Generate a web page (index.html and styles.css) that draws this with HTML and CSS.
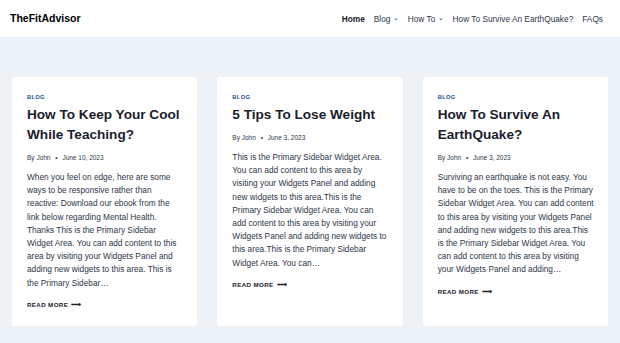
FILE: index.html
```html
<!DOCTYPE html>
<html lang="en">
<head>
    <meta charset="UTF-8">
    <meta name="viewport" content="width=device-width, initial-scale=1.0">
    <title>TheFitAdvisor</title>
    <link rel="stylesheet" href="styles.css">
</head>

<body>
    <header class="site-header">
        <div class="logo">TheFitAdvisor</div>
        <nav class="menu">
            <a class="active" href="#">Home</a>
            <a href="#">Blog <span class="caret">&#8964;</span></a>
            <a href="#">How To <span class="caret">&#8964;</span></a>
            <a href="#">How To Survive An EarthQuake?</a>
            <a href="#">FAQs</a>
        </nav>
    </header>

    <main class="posts">
        <article class="card">
            <div class="cat">Blog</div>
            <h2 class="post-title">How To Keep Your Cool While Teaching?</h2>
            <div class="meta">By John <span class="dot">&bull;</span> June 10, 2023</div>
            <p class="excerpt">When you feel on edge, here are some ways to be responsive rather than reactive: Download our ebook from the link below regarding Mental Health. Thanks This is the Primary Sidebar Widget Area. You can add content to this area by visiting your Widgets Panel and adding new widgets to this area. This is the Primary Sidebar&hellip;</p>
            <a class="more" href="#">Read More <span class="arrow">&#10230;</span></a>
        </article>

        <article class="card">
            <div class="cat">Blog</div>
            <h2 class="post-title">5 Tips To Lose Weight</h2>
            <div class="meta">By John <span class="dot">&bull;</span> June 3, 2023</div>
            <p class="excerpt">This is the Primary Sidebar Widget Area. You can add content to this area by visiting your Widgets Panel and adding new widgets to this area.This is the Primary Sidebar Widget Area. You can add content to this area by visiting your Widgets Panel and adding new widgets to this area.This is the Primary Sidebar Widget Area. You can&hellip;</p>
            <a class="more" href="#">Read More <span class="arrow">&#10230;</span></a>
        </article>

        <article class="card">
            <div class="cat">Blog</div>
            <h2 class="post-title">How To Survive An EarthQuake?</h2>
            <div class="meta">By John <span class="dot">&bull;</span> June 3, 2023</div>
            <p class="excerpt">Surviving an earthquake is not easy. You have to be on the toes. This is the Primary Sidebar Widget Area. You can add content to this area by visiting your Widgets Panel and adding new widgets to this area.This is the Primary Sidebar Widget Area. You can add content to this area by visiting your Widgets Panel and adding&hellip;</p>
            <a class="more" href="#">Read More <span class="arrow">&#10230;</span></a>
        </article>
    </main>
</body>
</html>
```

FILE: styles.css
```css
body {
    margin: 0;
    padding: 0;
    background-color: #edf2f7;
    font-family: "Liberation Sans", Arial, sans-serif;
    color: #2d3748;
}

a {
    text-decoration: none;
    color: inherit;
}

.site-header {
    height: 37px;
    background-color: #fff;
    display: flex;
    align-items: center;
    justify-content: space-between;
    padding: 0 17px 0 10px;
}

.logo {
    font-size: 10.5px;
    font-weight: bold;
    color: #000;
    padding-bottom: 1px;
}

.menu {
    display: flex;
    gap: 9px;
    font-size: 8.3px;
    color: #2d3748;
}

.menu .active {
    font-weight: bold;
    color: #1a202c;
}

.caret {
    font-size: 7px;
    position: relative;
    top: -2px;
}

.posts {
    display: grid;
    grid-template-columns: repeat(3, 1fr);
    gap: 20px;
    padding: 40px 12px 0 12px;
}

.card {
    background-color: #fff;
    border-radius: 3px;
    padding: 16px 14px 16px 15px;
    box-shadow: 0 12px 12px -8px rgba(0, 0, 0, 0.06);
}

.cat {
    font-size: 5.8px;
    font-weight: bold;
    text-transform: uppercase;
    letter-spacing: 0.05em;
    color: #215387;
    line-height: 8px;
}

.post-title {
    font-size: 13.6px;
    line-height: 20px;
    color: #1a202c;
    margin: 4px 0 0 0;
}

.meta {
    font-size: 6.5px;
    line-height: 10px;
    color: #2d3748;
    margin-top: 8px;
}

.dot {
    margin: 0 3px;
}

.excerpt {
    font-size: 8.3px;
    line-height: 13.2px;
    margin: 8px 0 0 0;
}

.more {
    display: block;
    margin-top: 10px;
    font-size: 6.2px;
    line-height: 10px;
    font-weight: bold;
    text-transform: uppercase;
    letter-spacing: 0.06em;
    color: #1a202c;
}

.arrow {
    font-size: 7px;
    margin-left: 1px;
}
```
